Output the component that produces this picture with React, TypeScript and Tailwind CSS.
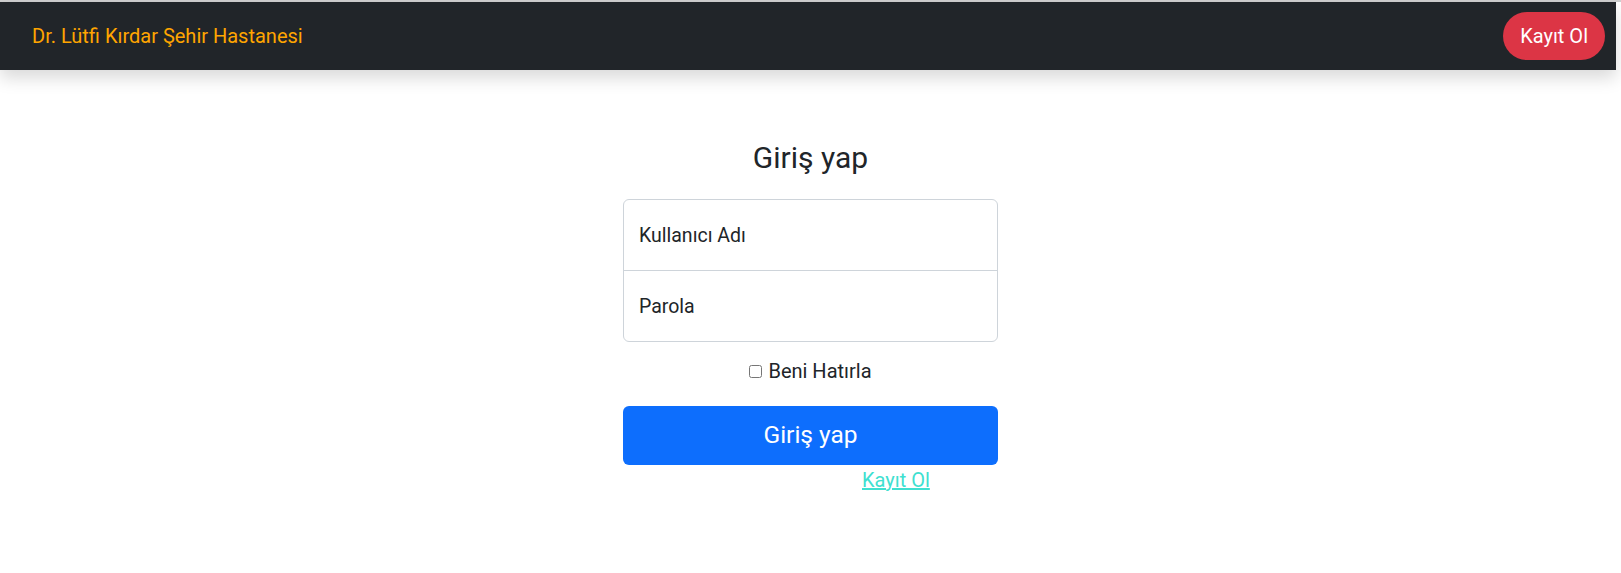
export default function App() {
  return (
    <div className="min-h-[573px] bg-white font-['Roboto',sans-serif] text-[#212529]">
      <div className="h-[2px] bg-[#cfcfcf]" />
      <nav className="mr-[5px] flex h-[68px] items-center justify-between bg-[#212529] pl-[32px] pr-[11px] shadow-[0_8px_16px_rgba(0,0,0,0.15)]">
        <a href="#" className="text-[20px] leading-[30px] text-[#ffa500]">
          Dr. Lütfi Kırdar Şehir Hastanesi
        </a>
        <button className="h-[48px] rounded-full bg-[#dc3545] px-[17px] text-[20px] leading-[30px] text-white">
          Kayıt Ol
        </button>
      </nav>

      <main className="flex flex-col items-center pt-[70px]">
        <h3 className="mb-[23px] text-[30px] leading-[36px]">Giriş yap</h3>

        <form className="w-[375px]">
          <div className="overflow-hidden rounded-md border border-[#ced4da]">
            <input
              type="text"
              placeholder="Kullanıcı Adı"
              className="block h-[70px] w-full px-[15px] text-[19.5px] outline-none placeholder:text-[#212529]"
            />
            <div className="h-px bg-[#ced4da]" />
            <input
              type="password"
              placeholder="Parola"
              className="block h-[70px] w-full px-[15px] text-[19.5px] outline-none placeholder:text-[#212529]"
            />
          </div>

          <label className="mt-[14px] flex items-center justify-center gap-[6px] text-[20px] leading-[30px]">
            <input type="checkbox" className="h-[13px] w-[13px]" />
            Beni Hatırla
          </label>

          <button
            type="submit"
            className="mt-[20px] h-[59px] w-full rounded-md bg-[#0d6efd] text-[24.5px] text-white"
          >
            Giriş yap
          </button>

          <div className="pl-[239px]">
            <a href="#" className="text-[20px] leading-[30px] text-[#40e0d0] underline">
              Kayıt Ol
            </a>
          </div>
        </form>
      </main>
    </div>
  );
}
